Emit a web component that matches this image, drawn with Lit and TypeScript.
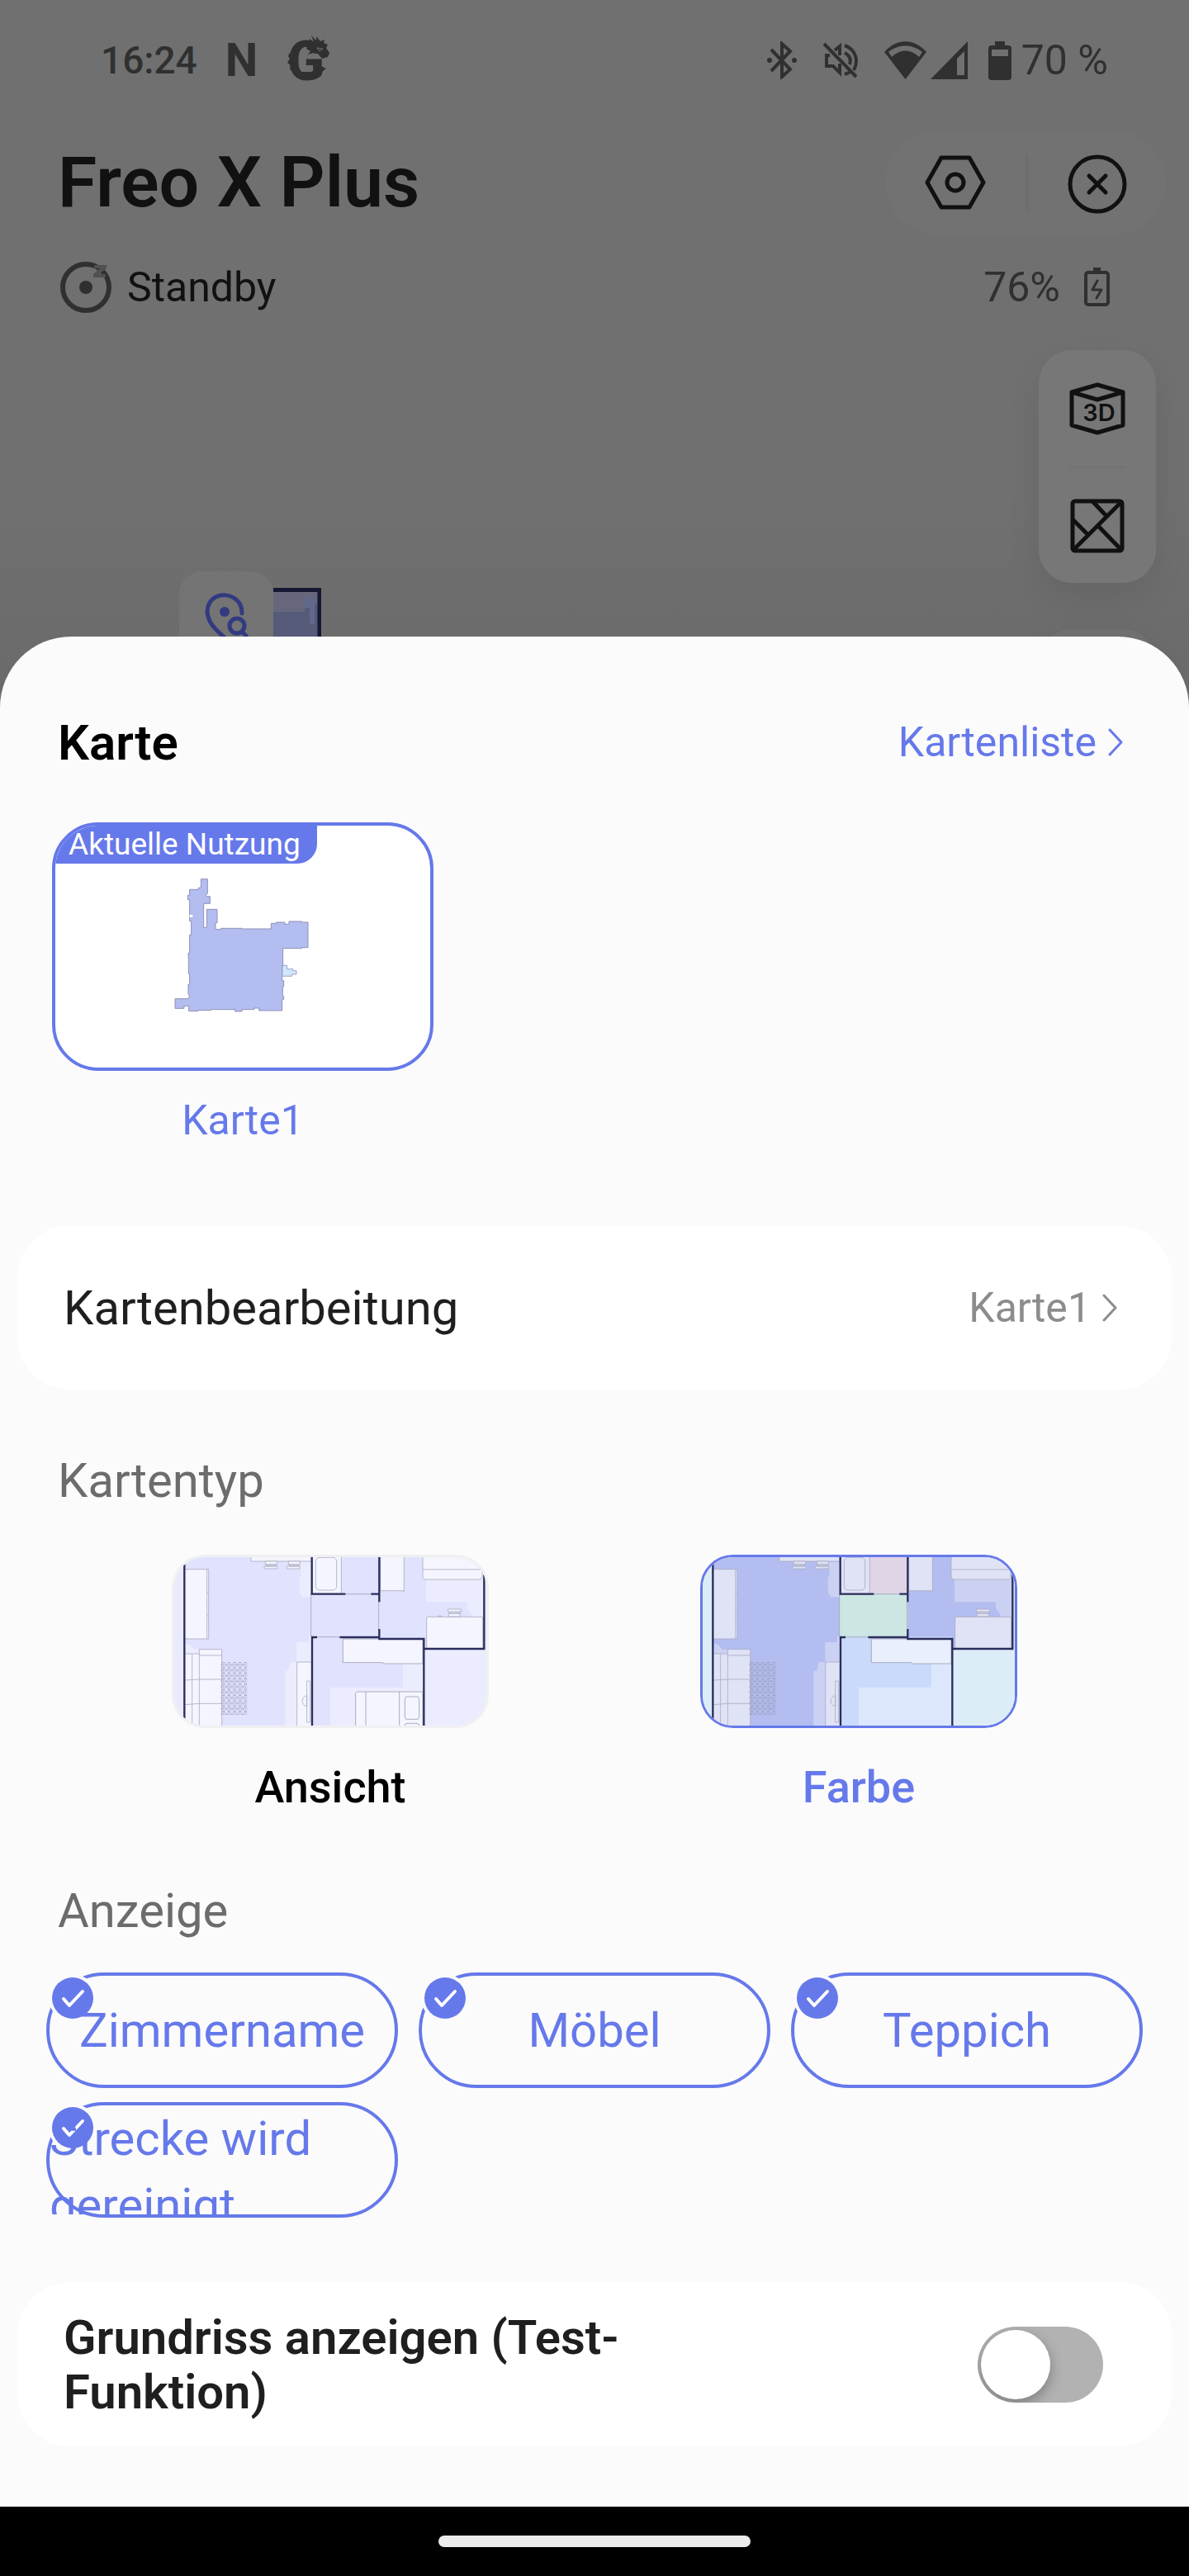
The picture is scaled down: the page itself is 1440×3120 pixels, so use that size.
import { LitElement, html, css, svg } from "lit";
import { customElement, property, state } from "lit/decorators.js";
import { classMap } from "lit/directives/class-map.js";

interface PlanPalette {
  side: string;
  living: string;
  livingSoft: string;
  bath: string;
  hall: string;
  study: string;
  studySoft: string;
  bed: string;
  bedSoft: string;
  balcony: string;
  furniture: string;
  wardrobe: string;
}

const PALETTES: Record<string, PlanPalette> = {
  ansicht: {
    side: "#e9ebfd",
    living: "#e1e3fe",
    livingSoft: "#ebedfe",
    bath: "#e1e3fe",
    hall: "#e1e3fe",
    study: "#e1e3fe",
    studySoft: "#ebedfe",
    bed: "#e1e3fe",
    bedSoft: "#ebedfe",
    balcony: "#ebedfe",
    furniture: "#f4f5fe",
    wardrobe: "#f4f5fe",
  },
  farbe: {
    side: "#dcedf8",
    living: "#b3bdf0",
    livingSoft: "#cbd1f3",
    bath: "#dfd5e6",
    hall: "#cbe6e3",
    study: "#b3bdf0",
    studySoft: "#cbd1f3",
    bed: "#c9dafa",
    bedSoft: "#dce7fd",
    balcony: "#dcedf8",
    furniture: "#e0e3f6",
    wardrobe: "#e9effd",
  },
};

@customElement("floor-plan")
export class FloorPlan extends LitElement {
  @property() variant = "ansicht";

  static styles = css`
    :host {
      display: block;
    }
    .plan {
      display: block;
      width: 100%;
      height: 100%;
    }
  `;

  render() {
    const p = PALETTES[this.variant];
    const wall = "#2b2d5c";
    const line = "#a9acc0";
    return html`<svg class="plan" viewBox="93 79 1134 612" preserveAspectRatio="xMidYMid slice" aria-hidden="true">
      <defs>
        <pattern id="rug" x="262" y="460" width="20" height="20" patternUnits="userSpaceOnUse">
          <path d="M4 5L9 0M11 0l5 5M4 15l5 5M11 20l5-5M0 10h3M17 10h3M10 6v8" stroke="#8f92ab" stroke-width="2" fill="none" />
          <path d="M3 6v8M17 6v8M6 1h8" stroke="#8f92ab" stroke-width="1.5" fill="none" />
        </pattern>
      </defs>
      <rect x="84" y="70" width="1152" height="630" fill=${p.side} />
      <rect x="130" y="70" width="462" height="630" fill=${p.living} />
      <path d="M550 96h42v128h-34l-10-18V150h6z" fill=${p.livingSoft} />
      <path d="M592 366v334h-96V492h12l6-32h24v-72h44v-22z" fill=${p.livingSoft} />
      <path d="M130 390l20 8 14 16h20v30h-54z" fill=${p.livingSoft} />
      <rect x="592" y="70" width="246" height="142" fill=${p.bath} />
      <rect x="592" y="212" width="246" height="156" fill=${p.hall} />
      <rect x="838" y="70" width="382" height="342" fill=${p.study} />
      <path d="M1008 70h212v240h-38l-10-26-14-20 0-22h-150z" fill=${p.studySoft} />
      <rect x="592" y="368" width="408" height="332" fill=${p.bed} />
      <path d="M660 552h264v-86h76v234H660z" fill=${p.bedSoft} />
      <path d="M1000 412h236v288h-236z" fill=${p.balcony} />

      <g fill=${p.furniture} stroke=${line} stroke-width="2.5">
        <path d="M130 123h88v253h-88zM212 123v253M212 208h6M212 292h6" />
        <path d="M372 76v18h220V70H372z" />
        <path d="M424 94h42v12h-42zM428 106h34v6h-34zM420 112h48v9h-48z" />
        <path d="M508 94h42v12h-42zM512 106h34v6h-34zM502 112h48v9h-48z" />
        <path d="M130 430h54v-16h82v290H130zM158 432v270M184 430v270M184 436h82M130 526l54-3h82M130 615l54-4h82" />
        <path d="M539 460h53v240h-53z" />
        <path d="M575 529h12v150h-12zM575 582c-22 4-22 36 0 39z" />
        <path d="M594 70h106v142H594z" />
        <rect x="607" y="80" width="76" height="119" rx="14" />
        <path d="M842 70h86v134h-4v-3h-82z" />
        <path d="M996 70h216v82l-6 8h-204l-6-8zM996 124h216" />
        <rect x="1010" y="296" width="204" height="116" rx="5" />
        <path d="M1088 268h48v10h-48zM1093 278h38v6h-38zM1090 284h42v11h-42zM1050 293h16" />
      </g>
      <path d="M706 376h290v90H854l-2-4H706z" fill=${p.wardrobe} stroke=${line} stroke-width="3" />
      ${this.variant === "ansicht"
        ? svg`<g fill=${p.furniture} stroke=${line} stroke-width="3">
            <path d="M752 704V573l5-5h235l4 5v131zM789 568v136M911 568v136" />
            <rect x="931" y="586" width="52" height="82" rx="8" />
            <rect x="931" y="683" width="52" height="82" rx="8" />
          </g>`
        : null}
      <rect x="262" y="460" width="96" height="192" fill="url(#rug)" />

      <g fill="none" stroke=${line} stroke-width="3">
        <path d="M590 212v156M836 240v100M714 213h94M610 369h84" />
      </g>
      <g fill="none" stroke=${wall} stroke-width="7">
        <path d="M130 70v630M593 70v143h122M808 213h29M838 70v172M838 340v36h162v324M594 700V370h18M694 370h144M1000 412h219V126" />
      </g>
    </svg>`;
  }
}

@customElement("app-root")
export class AppRoot extends LitElement {
  @state() private mapType = "farbe";
  @state() private shown: Record<string, boolean> = {
    Zimmername: true,
    "Möbel": true,
    Teppich: true,
    "Strecke wird gereinigt": true,
  };

  static styles = css`
    :host {
      display: block;
      --accent: #6679ea;
      --sheet: #fbfbfc;
      font-family: Roboto, "Liberation Sans", sans-serif;
      color: #1f1f1f;
    }
    * {
      box-sizing: border-box;
    }
    button {
      appearance: none;
      border: 0;
      padding: 0;
      background: none;
      font: inherit;
      color: inherit;
      cursor: pointer;
    }
    h1,
    h2,
    h3,
    p {
      margin: 0;
      font-weight: 400;
    }
    svg {
      display: block;
      flex: none;
    }
    .page {
      display: flex;
      flex-direction: column;
      min-height: 100vh;
      background: #707070;
    }

    /* Dimmed device view */
    .device {
      background: linear-gradient(#707070 70%, #6a6a6a);
      color: #111;
    }
    .statusbar {
      display: flex;
      align-items: center;
      justify-content: space-between;
      height: 146px;
      padding: 0 98px 0 122px;
      font-size: 46px;
      font-weight: 500;
      color: #303030;
    }
    .status-left,
    .status-right {
      display: flex;
      align-items: center;
    }
    .status-left {
      gap: 34px;
    }
    .notice {
      font-size: 56px;
      font-weight: 700;
    }
    .status-right {
      font-size: 50px;
      font-weight: 400;
    }
    .status-right .mute {
      margin-left: 30px;
    }
    .status-right .wifi {
      margin-left: 30px;
    }
    .status-right .signal {
      margin-left: 4px;
    }
    .status-right .phone-battery {
      margin: 0 12px 0 24px;
    }
    .titlebar {
      display: flex;
      align-items: center;
      justify-content: space-between;
      margin-top: 12px;
      padding: 0 28px 0 70px;
    }
    .title {
      font-size: 86px;
      line-height: 100px;
      font-weight: 600;
    }
    .title-actions {
      display: flex;
      align-items: center;
      height: 126px;
      border-radius: 63px;
      background: #727272;
    }
    .title-actions button {
      display: grid;
      place-items: center;
      width: 170px;
      height: 68px;
    }
    .title-actions button + button {
      border-left: 3px solid #6c6c6c;
    }
    .stateline {
      display: flex;
      align-items: center;
      justify-content: space-between;
      height: 64px;
      margin-top: 32px;
      padding: 0 96px 0 72px;
      font-size: 50px;
    }
    .state,
    .charge {
      display: flex;
      align-items: center;
    }
    .state {
      gap: 18px;
    }
    .charge {
      gap: 28px;
      color: #303030;
    }
    .map {
      position: relative;
      display: flex;
      flex-direction: column;
      align-items: flex-end;
      gap: 56px;
      padding: 44px 40px 0;
      overflow: hidden;
    }
    .tools {
      display: flex;
      flex-direction: column;
      align-items: center;
      width: 142px;
      border-radius: 40px;
      background: #777;
      box-shadow: 0 16px 40px rgba(0, 0, 0, 0.08);
    }
    .tools button {
      display: grid;
      place-items: center;
      width: 68px;
      height: 141px;
    }
    .tools button + button {
      border-top: 2px solid #727272;
    }
    .tools.next {
      height: 95px;
      background: #707070;
    }
    .room {
      position: absolute;
      top: 332px;
      left: 331px;
    }
    .pin {
      position: absolute;
      top: 312px;
      left: 217px;
      display: flex;
      justify-content: center;
      width: 114px;
      height: 114px;
      padding-top: 26px;
      border-radius: 28px;
      background: #747474;
    }

    /* Bottom sheet */
    .sheet {
      position: relative;
      flex: 1;
      margin-top: -86px;
      padding: 84px 0 73px;
      border-radius: 86px 86px 0 0;
      background: var(--sheet);
    }
    .sheet-head {
      display: flex;
      align-items: center;
      justify-content: space-between;
      height: 88px;
      padding: 0 80px 0 70px;
    }
    .sheet-title {
      font-size: 60px;
      font-weight: 600;
      color: #000;
    }
    .more {
      display: flex;
      align-items: center;
      gap: 14px;
      font-size: 50px;
      color: var(--accent);
      text-decoration: none;
    }
    .saved {
      display: flex;
      padding: 53px 63px 0;
    }
    .saved-map {
      display: flex;
      flex-direction: column;
      align-items: center;
      gap: 30px;
      width: 462px;
      font-size: 50px;
      line-height: 60px;
      color: var(--accent);
    }
    .thumb {
      display: flex;
      flex-direction: column;
      align-items: flex-start;
      width: 100%;
      height: 301px;
      border: 4px solid var(--accent);
      border-radius: 56px;
      background: #fff;
      overflow: hidden;
    }
    .tag {
      padding: 0 20px 0 16px;
      border-radius: 0 0 24px 0;
      background: var(--accent);
      font-size: 37px;
      line-height: 46px;
      color: #fff;
    }
    .outline {
      align-self: center;
      margin-top: 17px;
    }
    .card {
      display: flex;
      align-items: center;
      justify-content: space-between;
      min-height: 199px;
      margin: 0 21px;
      padding: 0 66px 0 56px;
      border-radius: 64px;
      background: #fff;
    }
    .edit {
      width: calc(100% - 42px);
      margin-top: 97px;
      text-align: left;
      font-size: 58px;
    }
    .edit .more {
      color: #8c8c8c;
    }
    .section {
      margin-top: 78px;
      padding: 0 70px;
      font-size: 58px;
      line-height: 64px;
      color: #6c6c6c;
    }
    .types {
      display: grid;
      grid-template-columns: 1fr 1fr;
      margin-top: 58px;
      padding: 0 80px;
    }
    .type {
      display: flex;
      flex-direction: column;
      align-items: center;
      gap: 40px;
      font-size: 54px;
      line-height: 64px;
      font-weight: 500;
      color: #000;
      cursor: pointer;
    }
    .type.on {
      color: var(--accent);
    }
    .preview {
      width: 60%;
      aspect-ratio: 64 / 35;
      border: 3px solid #f0f0f2;
      border-radius: 40px;
      overflow: hidden;
    }
    .type.on .preview {
      border-color: var(--accent);
    }
    .preview floor-plan {
      height: 100%;
    }
    .native {
      position: absolute;
      width: 1px;
      height: 1px;
      margin: 0;
      opacity: 0;
    }
    .section.display {
      margin-top: 85px;
    }
    .chips {
      display: grid;
      grid-template-columns: repeat(3, 1fr);
      gap: 17px 25px;
      margin: 43px 56px 0;
    }
    .chip {
      position: relative;
      display: flex;
      align-items: center;
      justify-content: center;
      height: 140px;
      border: 4px solid #c4c4c8;
      border-radius: 70px;
      font-size: 58px;
      line-height: 81px;
      color: #6c6c6c;
      cursor: pointer;
    }
    .chip.on {
      border-color: var(--accent);
      color: var(--accent);
    }
    .chip-text {
      position: relative;
      max-height: 132px;
      overflow: hidden;
    }
    .tick {
      position: absolute;
      top: 2px;
      left: 3px;
      width: 50px;
      height: 50px;
      border-radius: 50%;
      background: var(--accent);
      box-shadow: 0 0 0 4px var(--sheet);
    }
    .floor {
      margin-top: 78px;
      padding-right: 83px;
    }
    .floor-label {
      width: 56%;
      font-size: 58px;
      line-height: 66px;
      font-weight: 600;
    }
    .switch {
      appearance: none;
      flex: none;
      display: flex;
      align-items: center;
      width: 152px;
      height: 92px;
      margin: 0;
      padding: 4px;
      border-radius: 46px;
      background: #b2b2b2;
      overflow: hidden;
      cursor: pointer;
    }
    .switch::before {
      content: "";
      width: 84px;
      height: 84px;
      border-radius: 50%;
      background: #fff;
      box-shadow: 0 6px 16px rgba(0, 0, 0, 0.3);
    }
    .switch:checked {
      justify-content: flex-end;
      background: var(--accent);
    }
    .navbar {
      display: flex;
      justify-content: center;
      padding: 35px 0;
      background: #000;
    }
    .handle {
      width: 378px;
      height: 14px;
      border-radius: 7px;
      background: #ebebeb;
    }
  `;

  private chevron() {
    return html`<svg width="18" height="34" viewBox="0 0 18 34" fill="none" stroke="currentColor" stroke-width="3" stroke-linecap="round" stroke-linejoin="round" aria-hidden="true"><path d="M2 2l14 15L2 32" /></svg>`;
  }

  private statusBar() {
    return html`<div class="statusbar">
      <div class="status-left">
        <span>16:24</span>
        <span class="notice">N</span>
        <svg width="60" height="84" viewBox="0 -12 60 84" fill="#303030" aria-hidden="true">
          <text x="2" y="54" font-family="Roboto, sans-serif" font-size="66" font-weight="800">G</text>
          <path d="M29 4l5 4-3-8 6 6 0-5 5 6 5-2-1 4 5 2-2 4 4 6-2 5-7 2-5-6-6-1-7 3 4-5-5-3z" />
          <path d="M5 20l-2 5 2 3-3 5 4 3-1 5 4 2 1 5 5 0 3 4 4-2 4 4 4-4 5 3 3-5 5 0 2-5 4-3-6-3-12 7H18L9 36z" />
          <path d="M38 15l7 1-4 3zM26 22c4 0 6 4 12 2" fill="none" stroke="#707070" stroke-width="1" />
        </svg>
      </div>
      <div class="status-right">
        <svg width="38" height="46" viewBox="0 0 38 46" fill="none" stroke="#303030" stroke-width="4" aria-label="Bluetooth">
          <path d="M6 10l23 24-10 9V3l10 9L6 36" stroke-linejoin="miter" />
          <circle cx="4" cy="23" r="3" fill="#303030" stroke="none" />
          <circle cx="34" cy="23" r="3" fill="#303030" stroke="none" />
        </svg>
        <svg class="mute" width="44" height="46" viewBox="0 0 44 46" fill="none" stroke="#303030" stroke-width="4" aria-label="Stumm">
          <path d="M2 3l39 40" />
          <path d="M9 17H5v13h8l8 8V27M15 11l6-5v11" />
          <path d="M27 5c14 5 17 19 11 30M27 14c6 3 8 8 6 14M27 40c3-1 5-2 7-3" />
        </svg>
        <svg class="wifi" width="53" height="46" viewBox="0 0 53 46" fill="#303030" aria-label="WLAN">
          <path d="M1 13C16-4 37-4 52 13L26.5 46z" />
          <path d="M6 13C18 3 35 3 47 13l-4 6C33 9 20 9 10 19z" fill="#707070" />
        </svg>
        <svg class="signal" width="46" height="46" viewBox="0 0 46 46" fill="#303030" aria-label="Mobilfunk">
          <path d="M45 0v46H0z" />
          <path d="M41 12v29h-9V21z" fill="#707070" />
        </svg>
        <svg class="phone-battery" width="28" height="47" viewBox="0 0 28 47" fill="#303030" aria-hidden="true">
          <rect x="8" width="12" height="8" />
          <rect y="5" width="28" height="42" rx="4" />
          <rect x="4" y="10" width="20" height="8" fill="#707070" />
        </svg>
        <span>70 %</span>
      </div>
    </div>`;
  }

  private savedOutline() {
    return html`<svg class="outline" width="166" height="166" viewBox="98 102 498 498" aria-hidden="true">
      <path
        d="M195 107H219V160L212 166 217 170H228V196H205V283H216V217H254V266H248V290H268V286H345V288H450V268H469V264H500V271H515V261H562V264H584V356H562V359H493V420H490V476H496V498H492V533H496V544H490V585H406V576H389V581H344V588H319V581H231V584H184V587H151V568H134V577H101V542H148L154 534 149 524V490H154V452H150V400L149 376H154V310H160V260H154V182H147V166H154V145H186V139H195Z"
        fill="#b4bdf0" stroke="#8e91b8" stroke-width="3" stroke-linejoin="round" />
      <path d="M491 421H508V434H529V440H542V453H526V460H491Z" fill="#cfe6fd" stroke="#9fa6c4" stroke-width="3" />
      <rect x="154" y="237" width="11" height="9" fill="#fff" />
    </svg>`;
  }

  private typeOption(id: string, label: string) {
    const on = this.mapType === id;
    return html`<label class=${classMap({ type: true, on })}>
      <input class="native" type="radio" name="maptype" .checked=${on} @change=${() => (this.mapType = id)} />
      <span class="preview"><floor-plan variant=${id}></floor-plan></span>
      <span>${label}</span>
    </label>`;
  }

  private chip(name: string) {
    const on = this.shown[name];
    return html`<label class=${classMap({ chip: true, on })}>
      <input
        class="native"
        type="checkbox"
        .checked=${on}
        @change=${() => (this.shown = { ...this.shown, [name]: !on })} />
      ${on
        ? html`<svg class="tick" viewBox="0 0 50 50" fill="none" stroke="#fff" stroke-width="4" stroke-linecap="round" stroke-linejoin="round" aria-hidden="true">
            <path d="M14 26l7 8 16-17" />
          </svg>`
        : null}
      <span class="chip-text">${name}</span>
    </label>`;
  }

  render() {
    return html`<div class="page">
      <section class="device">
        ${this.statusBar()}
        <header class="titlebar">
          <h1 class="title">Freo X Plus</h1>
          <div class="title-actions">
            <button aria-label="Einstellungen">
              <svg width="74" height="68" viewBox="0 0 74 68" fill="none" stroke="#111" stroke-width="5" stroke-linejoin="round">
                <path d="M20 4h34l17 30-17 30H20L3 34z" />
                <circle cx="37" cy="34" r="10" />
              </svg>
            </button>
            <button aria-label="Schließen">
              <svg width="72" height="72" viewBox="0 0 72 72" fill="none" stroke="#111" stroke-width="5" stroke-linecap="round">
                <circle cx="36" cy="36" r="33" />
                <path d="M26 26l20 20M46 26L26 46" />
              </svg>
            </button>
          </div>
        </header>
        <div class="stateline">
          <p class="state">
            <svg width="64" height="64" viewBox="0 0 64 64" aria-hidden="true">
              <circle cx="32" cy="32" r="28" fill="none" stroke="#303030" stroke-width="6" />
              <circle cx="32" cy="32" r="8" fill="#303030" />
              <path d="M42 5h15v4l-9 7h8v4H41v-4l8-7h-7z" fill="#505050" />
            </svg>
            Standby
          </p>
          <p class="charge">
            76%
            <svg width="32" height="48" viewBox="0 0 32 48" fill="none" stroke="#303030" stroke-width="4" stroke-linejoin="round" aria-hidden="true">
              <rect x="3" y="6" width="27" height="39" rx="3" />
              <path d="M12 2h9" />
              <path d="M17 16l-6 11h11l-6 10" stroke-linecap="round" stroke-width="3" />
            </svg>
          </p>
        </div>
        <div class="map">
          <div class="tools">
            <button aria-label="3D-Ansicht">
              <svg width="68" height="64" viewBox="0 0 68 64" fill="none" stroke="#111" stroke-width="5" stroke-linejoin="round">
                <path d="M34 3l31 9v40l-31 9-31-9V12zM3 12l31 9 31-9" />
                <text x="36" y="47" text-anchor="middle" font-family="Inter, sans-serif" font-size="29" font-weight="600" fill="#111" stroke="none">3D</text>
              </svg>
            </button>
            <button aria-label="Karte">
              <svg width="66" height="66" viewBox="0 0 66 66" fill="none" stroke="#111" stroke-width="5" stroke-linejoin="round">
                <rect x="3" y="3" width="60" height="60" rx="3" />
                <path d="M3 63L63 3M27 3l17 18M3 25l19 19M34 33l29 30" />
              </svg>
            </button>
          </div>
          <div class="tools next"></div>
          <svg class="room" width="58" height="90" viewBox="0 0 58 90" aria-hidden="true">
            <rect width="58" height="90" fill="#555b78" />
            <path d="M0 5h53v14H38v10H0z" fill="#66677c" />
            <path d="M38 14q4-6 12 0v30h-6V24h-6z" fill="#62688a" />
            <path d="M0 2.5h56V90" fill="none" stroke="#171733" stroke-width="5" />
          </svg>
          <button class="pin" aria-label="Gerät suchen">
            <svg width="54" height="64" viewBox="0 0 54 64" fill="none" stroke="#323a80" stroke-width="5" stroke-linecap="round">
              <path d="M46 25C47-2 6-6 4 22c0 15 13 25 24 35" />
              <circle cx="25" cy="23" r="6" fill="#323a80" stroke="none" />
              <circle cx="40" cy="40" r="9" />
              <path d="M46 47l5 5" />
            </svg>
          </button>
        </div>
      </section>

      <main class="sheet">
        <div class="sheet-head">
          <h2 class="sheet-title">Karte</h2>
          <a class="more" href="#kartenliste">Kartenliste ${this.chevron()}</a>
        </div>
        <div class="saved">
          <button class="saved-map">
            <span class="thumb">
              <span class="tag">Aktuelle Nutzung</span>
              ${this.savedOutline()}
            </span>
            <span>Karte1</span>
          </button>
        </div>
        <button class="card edit">
          <span>Kartenbearbeitung</span>
          <span class="more">Karte1 ${this.chevron()}</span>
        </button>
        <h3 class="section">Kartentyp</h3>
        <div class="types" role="radiogroup" aria-label="Kartentyp">
          ${this.typeOption("ansicht", "Ansicht")} ${this.typeOption("farbe", "Farbe")}
        </div>
        <h3 class="section display">Anzeige</h3>
        <div class="chips">${Object.keys(this.shown).map((name) => this.chip(name))}</div>
        <div class="card floor">
          <label class="floor-label" for="floor">Grundriss anzeigen (Test-Funktion)</label>
          <input class="switch" id="floor" type="checkbox" role="switch" />
        </div>
      </main>
      <div class="navbar"><div class="handle"></div></div>
    </div>`;
  }
}
